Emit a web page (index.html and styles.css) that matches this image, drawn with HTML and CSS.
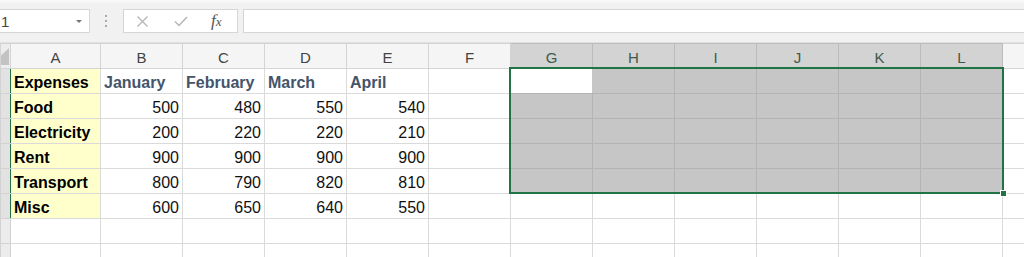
FILE: index.html
```html
<!DOCTYPE html>
<html lang="en">
<head>
<meta charset="UTF-8">
<meta name="viewport" content="width=device-width, initial-scale=1.0">
<title>Expenses - Sheet1</title>
<link rel="stylesheet" href="styles.css">
</head>
<body>

<div class="toolbar">
    <div class="namebox">
        <span class="ref">1</span>
        <span class="caret"></span>
    </div>
    <div class="grip"><i></i><i></i><i></i></div>
    <div class="fx-buttons">
        <svg class="btn-cancel" width="11" height="11" viewBox="0 0 11 11">
            <path d="M0.5 0.5 L10.5 10.5 M10.5 0.5 L0.5 10.5" stroke="#b5b5b5" stroke-width="1.3" fill="none"/>
        </svg>
        <svg class="btn-enter" width="14" height="11" viewBox="0 0 14 11">
            <path d="M1 5.5 L5 9.5 L13 1" stroke="#b5b5b5" stroke-width="1.5" fill="none"/>
        </svg>
        <span class="fx"><i>f</i><i class="fx-x">x</i></span>
    </div>
    <div class="formula"></div>
</div>

<div class="sheet-wrap">
    <table class="sheet">
        <colgroup>
            <col class="c-rh">
            <col class="c-a">
            <col><col><col><col><col><col><col><col><col><col><col>
            <col class="c-rest">
        </colgroup>
        <thead>
            <tr class="cols">
                <th class="corner">
                    <svg width="10" height="24" viewBox="0 0 10 24"><polygon points="8,4 8,21 -10,21" fill="#c3c3c3"/></svg>
                </th>
                <th>A</th><th>B</th><th>C</th><th>D</th><th>E</th><th>F</th>
                <th class="on">G</th><th class="on">H</th><th class="on">I</th>
                <th class="on">J</th><th class="on">K</th><th class="on">L</th>
                <th></th>
            </tr>
        </thead>
        <tbody>
            <tr>
                <th class="rh on"></th>
                <td class="lbl">Expenses</td>
                <td class="mon">January</td>
                <td class="mon">February</td>
                <td class="mon">March</td>
                <td class="mon">April</td>
                <td></td>
                <td class="active"></td>
                <td class="sel"></td><td class="sel"></td><td class="sel"></td><td class="sel"></td><td class="sel"></td>
                <td></td>
            </tr>
            <tr>
                <th class="rh on"></th>
                <td class="lbl">Food</td>
                <td class="num">500</td><td class="num">480</td><td class="num">550</td><td class="num">540</td>
                <td></td>
                <td class="sel"></td><td class="sel"></td><td class="sel"></td><td class="sel"></td><td class="sel"></td><td class="sel"></td>
                <td></td>
            </tr>
            <tr>
                <th class="rh on"></th>
                <td class="lbl">Electricity</td>
                <td class="num">200</td><td class="num">220</td><td class="num">220</td><td class="num">210</td>
                <td></td>
                <td class="sel"></td><td class="sel"></td><td class="sel"></td><td class="sel"></td><td class="sel"></td><td class="sel"></td>
                <td></td>
            </tr>
            <tr>
                <th class="rh on"></th>
                <td class="lbl">Rent</td>
                <td class="num">900</td><td class="num">900</td><td class="num">900</td><td class="num">900</td>
                <td></td>
                <td class="sel"></td><td class="sel"></td><td class="sel"></td><td class="sel"></td><td class="sel"></td><td class="sel"></td>
                <td></td>
            </tr>
            <tr>
                <th class="rh on"></th>
                <td class="lbl">Transport</td>
                <td class="num">800</td><td class="num">790</td><td class="num">820</td><td class="num">810</td>
                <td></td>
                <td class="sel"></td><td class="sel"></td><td class="sel"></td><td class="sel"></td><td class="sel"></td><td class="sel"></td>
                <td></td>
            </tr>
            <tr>
                <th class="rh on"></th>
                <td class="lbl last">Misc</td>
                <td class="num">600</td><td class="num">650</td><td class="num">640</td><td class="num">550</td>
                <td></td><td></td><td></td><td></td><td></td><td></td><td></td><td></td>
            </tr>
            <tr>
                <th class="rh"></th>
                <td></td><td></td><td></td><td></td><td></td><td></td><td></td>
                <td></td><td></td><td></td><td></td><td></td><td></td>
            </tr>
            <tr>
                <th class="rh"></th>
                <td></td><td></td><td></td><td></td><td></td><td></td><td></td>
                <td></td><td></td><td></td><td></td><td></td><td></td>
            </tr>
        </tbody>
    </table>

    <!-- selection outline for G1:L5 -->
    <div class="selection"><span class="handle"></span></div>
</div>

</body>
</html>
```

FILE: styles.css
```css
body {
    margin: 0;
    width: 1024px;
    height: 257px;
    overflow: hidden;
    background-color: #fff;
    font-family: "Liberation Sans", Arial, sans-serif;
}

/* formula bar */
.toolbar {
    display: flex;
    align-items: flex-start;
    height: 43px;
    box-sizing: border-box;
    padding-top: 9px;
    background: linear-gradient(#fafafa 0, #f1f1f1 4px);
    border-bottom: 1px solid #e0e0e0;
}
.namebox {
    width: 91px;
    height: 24px;
    margin-left: -1px;
    box-sizing: border-box;
    display: flex;
    align-items: center;
    justify-content: space-between;
    padding: 0 7px 0 1px;
    background-color: #fff;
    border: 1px solid #d6d6d6;
    font-size: 15px;
    color: #444;
}
.caret {
    border-left: 3px solid transparent;
    border-right: 3px solid transparent;
    border-top: 3px solid #777;
}
.grip {
    display: flex;
    flex-direction: column;
    gap: 3px;
    margin: 6px 0 0 15px;
}
.grip i {
    display: block;
    width: 2px;
    height: 2px;
    background-color: #a9a9a9;
}
.fx-buttons {
    display: flex;
    align-items: center;
    width: 115px;
    height: 24px;
    margin-left: 16px;
    box-sizing: border-box;
    background-color: #fff;
    border: 1px solid #d6d6d6;
}
.btn-cancel {
    margin-left: 13px;
}
.btn-enter {
    margin-left: 26px;
}
.fx {
    margin-left: 23px;
    font-family: "Liberation Serif", "Times New Roman", serif;
    font-size: 17px;
    color: #555;
}
.fx-x {
    font-size: 13px;
}
.formula {
    flex: 1;
    height: 24px;
    margin: 0 -2px 0 5px;
    box-sizing: border-box;
    background-color: #fff;
    border: 1px solid #d6d6d6;
}

/* grid */
.sheet-wrap {
    position: relative;
}
.sheet {
    border-collapse: collapse;
    table-layout: fixed;
    width: 1030px;
    font-size: 16px;
}
.sheet col {
    width: 82px;
}
.sheet col.c-rh {
    width: 10px;
}
.sheet col.c-a {
    width: 90px;
}
.sheet col.c-rest {
    width: 28px;
}
.sheet tr {
    height: 25px;
}
.sheet th, .sheet td {
    padding: 0 3px;
    border: 1px solid #dadada;
    white-space: nowrap;
    overflow: hidden;
    vertical-align: bottom;
    line-height: 20px;
}
.cols th {
    background-color: #f5f5f5;
    border-color: #d4d4d4;
    color: #444;
    font-weight: normal;
    font-size: 15px;
    line-height: 17px;
    padding-bottom: 2px;
    text-align: center;
}
.cols th.on {
    background-color: #d3d3d3;
    border-color: #bcbcbc;
    color: #3e5a4b;
}
.cols th.corner {
    padding: 0;
    line-height: 0;
    vertical-align: top;
    text-align: left;
    background-color: #ededed;
}
.sheet .rh {
    padding: 0;
    background-color: #ececec;
    border-color: #d2d2d2;
}
.sheet .rh.on {
    background-color: #e2e2e2;
    border-right: 1px solid #217346;
}

.lbl {
    background-color: #ffffcc;
    font-weight: bold;
    color: #000;
    border-top-color: #ffffcc;
    border-bottom-color: #ffffcc;
}
.sheet td.last {
    border-bottom-color: #dadada;
}
.mon {
    color: #44546a;
    font-weight: bold;
    border-bottom: 2px solid #adbdd5;
}
.num {
    text-align: right;
    padding-right: 4px;
    color: #111;
}
.sheet td.sel {
    background-color: #c6c6c6;
    border-color: #b4b4b4;
}
.sheet td.active {
    background-color: #fff;
    border-color: #c6c6c6 #c6c6c6 #b4b4b4 #217346;
}

.selection {
    position: absolute;
    left: 509px;
    top: 24px;
    width: 491px;
    height: 123px;
    border: 2px solid #217346;
}
.handle {
    position: absolute;
    right: -5px;
    bottom: -5px;
    width: 5px;
    height: 5px;
    background-color: #217346;
    border: 1px solid #fff;
}
```
